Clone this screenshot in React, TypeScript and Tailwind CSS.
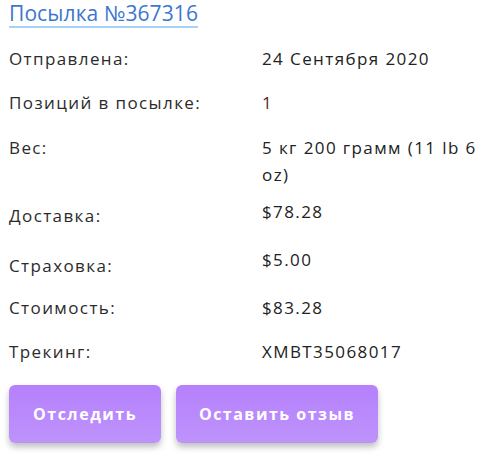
const font = { fontFamily: '"Open Sans", "Liberation Sans", sans-serif' };

type Row = {
  label: string;
  value: string;
  mt: string; // gap above the row
  labelPt?: string; // some values sit a bit higher than their labels
};

const rows: Row[] = [
  { label: "Отправлена:", value: "24 Сентября 2020", mt: "mt-[17px]" },
  { label: "Позиций в посылке:", value: "1", mt: "mt-[17px]" },
  { label: "Вес:", value: "5 кг 200 грамм (11 lb 6 oz)", mt: "mt-[18px]" },
  { label: "Доставка:", value: "$78.28", mt: "mt-[10px]", labelPt: "pt-[4px]" },
  { label: "Страховка:", value: "$5.00", mt: "mt-[17px]", labelPt: "pt-[6px]" },
  { label: "Стоимость:", value: "$83.28", mt: "mt-[15px]" },
  { label: "Трекинг:", value: "XMBT35068017", mt: "mt-[17px]" },
];

export default function App() {
  return (
    <div className="min-h-[457px] w-[490px] bg-white pl-[9px] text-[17px] tracking-[1.4px]" style={font}>
      <div className="inline-block border-b-2 border-[#a9d1f7] text-[21px] leading-[26px] tracking-[0.1px] text-[#3c77cf]">
        Посылка №367316
      </div>

      <div className="mt-[17px] flex flex-col">
        {rows.map((r, i) => (
          <div key={r.label} className={`flex leading-[27px] ${i === 0 ? "" : r.mt}`}>
            <div className={`w-[253px] shrink-0 text-[#2b2b2b] ${r.labelPt ?? ""}`}>{r.label}</div>
            <div className={`w-[222px] ${r.value === "1" ? "text-[#5a1f1f]" : "text-[#222]"}`}>{r.value}</div>
          </div>
        ))}
      </div>

      <div className="mt-[20px] flex gap-[15px]">
        <button className="h-[58px] w-[152px] rounded-[6px] bg-gradient-to-b from-[#b680fd] to-[#bd93fb] text-[16px] font-bold tracking-[1.5px] text-white shadow-[0_4px_6px_rgba(0,0,0,0.25)]">
          Отследить
        </button>
        <button className="h-[58px] w-[202px] rounded-[6px] bg-gradient-to-b from-[#b680fd] to-[#bd93fb] text-[16px] font-bold tracking-[1.5px] text-white shadow-[0_4px_6px_rgba(0,0,0,0.25)]">
          Оставить отзыв
        </button>
      </div>
    </div>
  );
}
